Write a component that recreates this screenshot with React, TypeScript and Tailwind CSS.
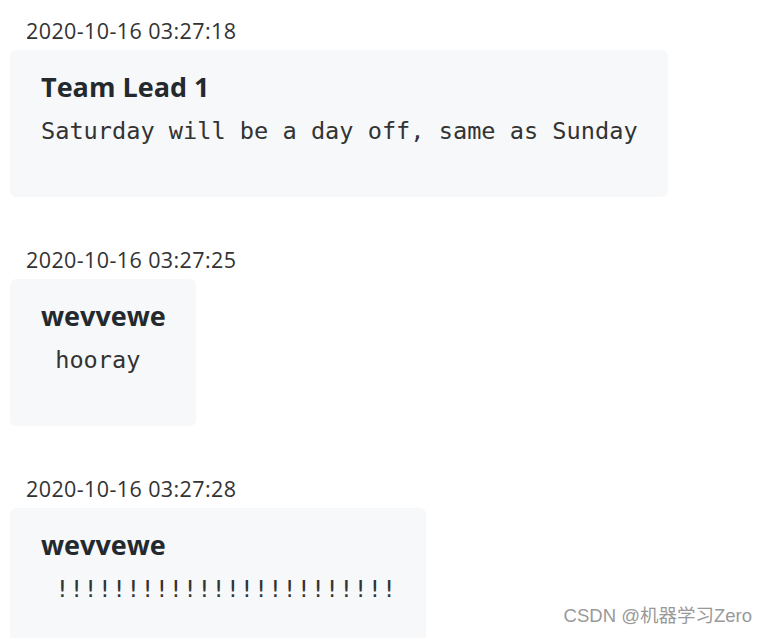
const messages = [
  { time: "2020-10-16 03:27:18", name: "Team Lead 1", text: "Saturday will be a day off, same as Sunday" },
  { time: "2020-10-16 03:27:25", name: "wevvewe", text: " hooray" },
  { time: "2020-10-16 03:27:28", name: "wevvewe", text: " !!!!!!!!!!!!!!!!!!!!!!!!" },
];

export default function App() {
  return (
    <main className="relative h-[638px] w-[766px] overflow-hidden bg-white">
      <div className="flex flex-col items-start gap-[48px] pl-[10px] pt-[16px]">
        {messages.map((m, i) => (
          <div key={i} className="flex flex-col items-start gap-[4px]">
            <div className="pl-[16px] text-[21.5px] leading-[30px] tracking-[0.4px] text-[#333] [font-family:'Open_Sans',sans-serif]">
              {m.time}
            </div>
            <div className="rounded-[6px] bg-[#f6f8fa] pb-[48px] pl-[31px] pr-[30px] pt-[19px]">
              <h3 className="text-[27px] font-bold leading-[36px] text-[#24292e] [font-family:'Open_Sans',sans-serif]">
                {m.name}
              </h3>
              <pre className="mt-[8px] whitespace-pre text-[23.6px] leading-[36px] text-[#333] [font-family:'DejaVu_Sans_Mono',monospace]">
                {m.text}
              </pre>
            </div>
          </div>
        ))}
      </div>

      {/* watermark */}
      <div className="absolute bottom-[8px] right-[14px] text-[18.5px] text-[#999] [font-family:'Liberation_Sans','Noto_Sans_CJK_SC',sans-serif]">
        CSDN @机器学习Zero
      </div>
    </main>
  );
}
